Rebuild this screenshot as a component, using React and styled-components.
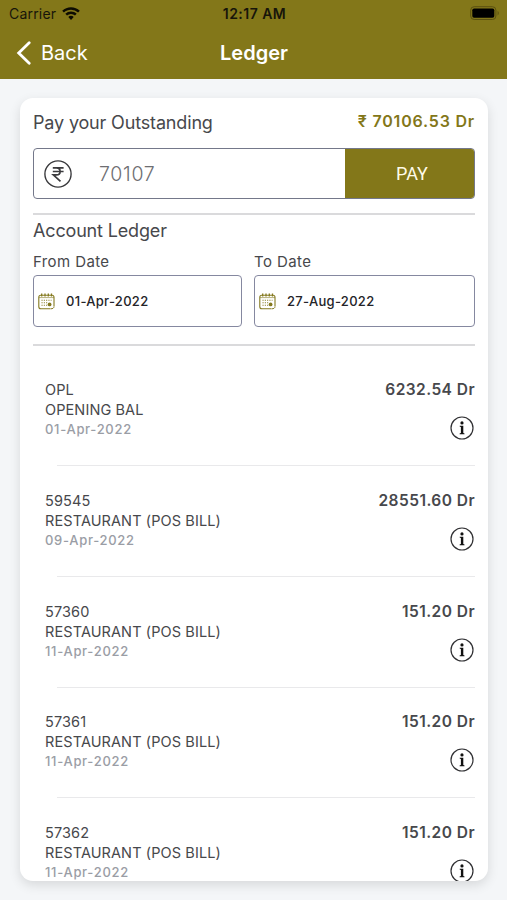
import React from "react";
import styled, { createGlobalStyle } from "styled-components";

const entries = [
  { no: "OPL", title: "OPENING BAL", date: "01-Apr-2022", amount: "6232.54 Dr" },
  { no: "59545", title: "RESTAURANT (POS BILL)", date: "09-Apr-2022", amount: "28551.60 Dr" },
  { no: "57360", title: "RESTAURANT (POS BILL)", date: "11-Apr-2022", amount: "151.20 Dr" },
  { no: "57361", title: "RESTAURANT (POS BILL)", date: "11-Apr-2022", amount: "151.20 Dr" },
  { no: "57362", title: "RESTAURANT (POS BILL)", date: "11-Apr-2022", amount: "151.20 Dr" },
];

const WifiIcon = () => (
  <svg width="18" height="14" viewBox="0 0 18 14" fill="#0d0c02">
    <path d="M9 0.2c3.4 0 6.5 1.3 8.8 3.5l-1.7 1.8A10.3 10.3 0 0 0 9 2.7c-2.7 0-5.2 1-7.1 2.8L.2 3.7A12.7 12.7 0 0 1 9 .2z" />
    <path d="M9 4.5c2.2 0 4.2.9 5.7 2.3L13 8.6a5.8 5.8 0 0 0-8 0L3.3 6.8A8.3 8.3 0 0 1 9 4.5z" />
    <path d="M9 8.8c1.1 0 2 .4 2.7 1.1L9 12.9 6.300 9.900C7 9.200 7.900 8.800 9 8.800z" />
  </svg>
);

const BatteryIcon = () => (
  <svg width="30" height="15" viewBox="0 0 30 15">
    <rect x="0.7" y="0.7" width="25.2" height="12.8" rx="3.5" fill="none" stroke="#5a5111" />
    <rect x="2.3" y="2.5" width="22" height="9.2" rx="1.8" fill="#000" />
    <path d="M27.6 4.8c1.5.7 1.5 4 0 4.7z" fill="#5a5111" />
  </svg>
);

const BackIcon = () => (
  <svg width="16" height="24" viewBox="0 0 16 24" fill="none" stroke="#fff" strokeWidth="2.8">
    <path d="M13.2 1.7L2.7 12l10.5 10.3" strokeLinecap="round" />
  </svg>
);

const RupeeIcon = () => (
  <svg width="28" height="28" viewBox="0 0 28 28" fill="none" stroke="#3b3b3e">
    <circle cx="14" cy="14" r="13.1" strokeWidth="1.4" />
    <path
      d="M8.800 7.900h10.800M8.800 11.500h10.800M9 7.900h3.500c4.800 0 4.800 7 0 7H9.300l7.200 6.500"
      strokeWidth="1.7"
    />
  </svg>
);

const CalendarIcon = () => (
  <svg width="17" height="17" viewBox="0 0 17 17" fill="none" stroke="#84791f">
    <path d="M12.5 15.8H2.8c-1.2 0-2-.8-2-2V4.2c0-1.2.8-2 2-2h11.2c1.2 0 2 .8 2 2v9" strokeWidth="1.1" />
    <path d="M1 4.6h15" strokeWidth="0.6" />
    <path d="M3.7.5v3M7 .5v3M10.300.5v3M13.500.5v3" strokeWidth="1.3" />
    <path d="M3.500 7.300h10M3.500 9.800h6M3.500 12.300h6" strokeWidth="1.1" strokeDasharray="1.1 1.2" />
    <circle cx="11.6" cy="11.4" r="1.9" fill="#84791f" stroke="none" />
    <path d="M12.8 15.8c1.800 0 3.200-.7 3.200-2.300" strokeWidth="1" />
  </svg>
);

const InfoIcon = () => (
  <svg width="24" height="24" viewBox="0 0 24 24">
    <circle cx="12" cy="12" r="11" fill="none" stroke="#303033" strokeWidth="1.2" />
    <circle cx="12" cy="6.9" r="1.6" fill="#111" />
    <path d="M9.700 9.700h3.600v7.300l1.200.4v.8H9.600v-.8l1.300-.4v-6.100l-1.200-.4z" fill="#111" />
  </svg>
);

const App = () => {
  return (
    <>
      <GlobalStyle />
      <Screen>
        <Header>
          <StatusBar>
            <Carrier>
              Carrier <WifiIcon />
            </Carrier>
            <Clock>12:17 AM</Clock>
            <BatteryIcon />
          </StatusBar>
          <NavBar>
            <BackButton>
              <BackIcon />
              <span>Back</span>
            </BackButton>
            <Title>Ledger</Title>
          </NavBar>
        </Header>
        <Card>
          <Outstanding>
            <Heading>Pay your Outstanding</Heading>
            <Total>₹ 70106.53 Dr</Total>
          </Outstanding>
          <PayForm>
            <RupeeIcon />
            <Amount>70107</Amount>
            <PayButton>PAY</PayButton>
          </PayForm>
          <Filters>
            <Heading>Account Ledger</Heading>
            <Dates>
              <Field>
                <Label>From Date</Label>
                <DateBox>
                  <CalendarIcon />
                  01-Apr-2022
                </DateBox>
              </Field>
              <Field>
                <Label>To Date</Label>
                <DateBox>
                  <CalendarIcon />
                  27-Aug-2022
                </DateBox>
              </Field>
            </Dates>
          </Filters>
          <List>
            {entries.map((entry) => (
              <Entry key={entry.no}>
                <div className="details">
                  <p>{entry.no}</p>
                  <p>{entry.title}</p>
                  <p className="date">{entry.date}</p>
                </div>
                <div className="summary">
                  <p>{entry.amount}</p>
                  <InfoIcon />
                </div>
              </Entry>
            ))}
          </List>
        </Card>
      </Screen>
    </>
  );
};

const GlobalStyle = createGlobalStyle`
  * {
    margin: 0;
    padding: 0;
    box-sizing: border-box;
  }
  body {
    font-family: Inter, "Liberation Sans", sans-serif;
    color: #47484c;
    overflow: hidden;
  }
  svg {
    display: block;
    flex-shrink: 0;
  }
`;

const Screen = styled.div`
  display: flex;
  flex-direction: column;
  height: 900px;
  background-color: #f4f6f8;
`;

const Header = styled.header`
  height: 79px;
  flex-shrink: 0;
  background-color: #837719;
`;

const StatusBar = styled.div`
  display: grid;
  grid-template-columns: 1fr auto 1fr;
  align-items: center;
  height: 27px;
  padding: 0 7px 0 9px;
  color: #17150a;
  > svg {
    justify-self: end;
  }
`;

const Carrier = styled.div`
  display: flex;
  align-items: center;
  gap: 6px;
  font-size: 14px;
  letter-spacing: 0.2px;
`;

const Clock = styled.div`
  font-size: 14px;
  font-weight: 600;
  letter-spacing: 0.45px;
`;

const NavBar = styled.nav`
  display: grid;
  grid-template-columns: 1fr auto 1fr;
  align-items: center;
  height: 51px;
  padding: 0 15px 0 16px;
  color: #fff;
`;

const BackButton = styled.button`
  display: flex;
  align-items: center;
  gap: 9px;
  border: none;
  background: none;
  color: #fff;
  font-family: inherit;
  font-size: 20px;
`;

const Title = styled.h1`
  font-size: 20px;
  font-weight: 600;
`;

const Card = styled.main`
  height: 783px;
  margin: 19px 19px 0 20px;
  padding: 0 13px;
  overflow: hidden;
  border-radius: 13px;
  background-color: #fff;
  box-shadow: 0 4px 12px rgba(0, 0, 0, 0.12);
`;

const Outstanding = styled.div`
  display: flex;
  justify-content: space-between;
  align-items: center;
  height: 50px;
  padding-bottom: 1px;
`;

const Heading = styled.h2`
  font-size: 18px;
  font-weight: 400;
  line-height: 24px;
  letter-spacing: -0.16px;
`;

const Total = styled.p`
  margin-bottom: 3px;
  color: #837719;
  font-size: 16px;
  font-weight: 600;
  letter-spacing: 0.8px;
`;

const PayForm = styled.div`
  display: flex;
  align-items: center;
  height: 51px;
  padding-left: 10px;
  overflow: hidden;
  border: 1px solid #74788a;
  border-radius: 4px;
`;

const Amount = styled.div`
  flex: 1;
  padding-left: 27px;
  color: #6e6e72;
  font-size: 19.5px;
  font-weight: 300;
  letter-spacing: 0.7px;
`;

const PayButton = styled.button`
  width: 129px;
  height: 50px;
  padding-left: 5px;
  border: none;
  background-color: #837719;
  color: #fffbe8;
  font-family: Roboto, sans-serif;
  font-size: 18px;
`;

const Filters = styled.section`
  height: 133px;
  margin-top: 14px;
  padding-top: 4px;
  border-top: 2px solid #dadadc;
  border-bottom: 2px solid #dadadc;
`;

const Dates = styled.div`
  display: grid;
  grid-template-columns: 209px 221px;
  justify-content: space-between;
  margin-top: 10px;
`;

const Field = styled.div`
  display: flex;
  flex-direction: column;
`;

const Label = styled.label`
  font-size: 15px;
  line-height: 18px;
  letter-spacing: 0.4px;
  margin-bottom: 4px;
`;

const DateBox = styled.div`
  display: flex;
  align-items: center;
  gap: 11px;
  height: 52px;
  padding-left: 4px;
  border: 1px solid #8588a0;
  border-radius: 4px;
  color: #242428;
  font-size: 13px;
  font-weight: 500;
  letter-spacing: 0.3px;
`;

const List = styled.ul`
  padding-top: 34px;
  list-style: none;
`;

const Entry = styled.li`
  display: flex;
  justify-content: space-between;
  padding-left: 12px;
  height: 110.8px;
  background: linear-gradient(#e9e9eb, #e9e9eb) 24px 85px / 100% 1px no-repeat;

  .details {
    font-size: 14.5px;
    line-height: 20px;
    letter-spacing: 0.1px;
  }
  .date {
    color: #9a9da5;
    font-size: 13px;
    font-weight: 500;
    line-height: 19px;
    letter-spacing: 0.7px;
  }
  .summary {
    display: flex;
    flex-direction: column;
    align-items: flex-end;
    gap: 16px;
    font-size: 15.5px;
    font-weight: 600;
    line-height: 20px;
    letter-spacing: 0.45px;
    svg {
      margin-right: 1px;
    }
  }
`;

export default App;
